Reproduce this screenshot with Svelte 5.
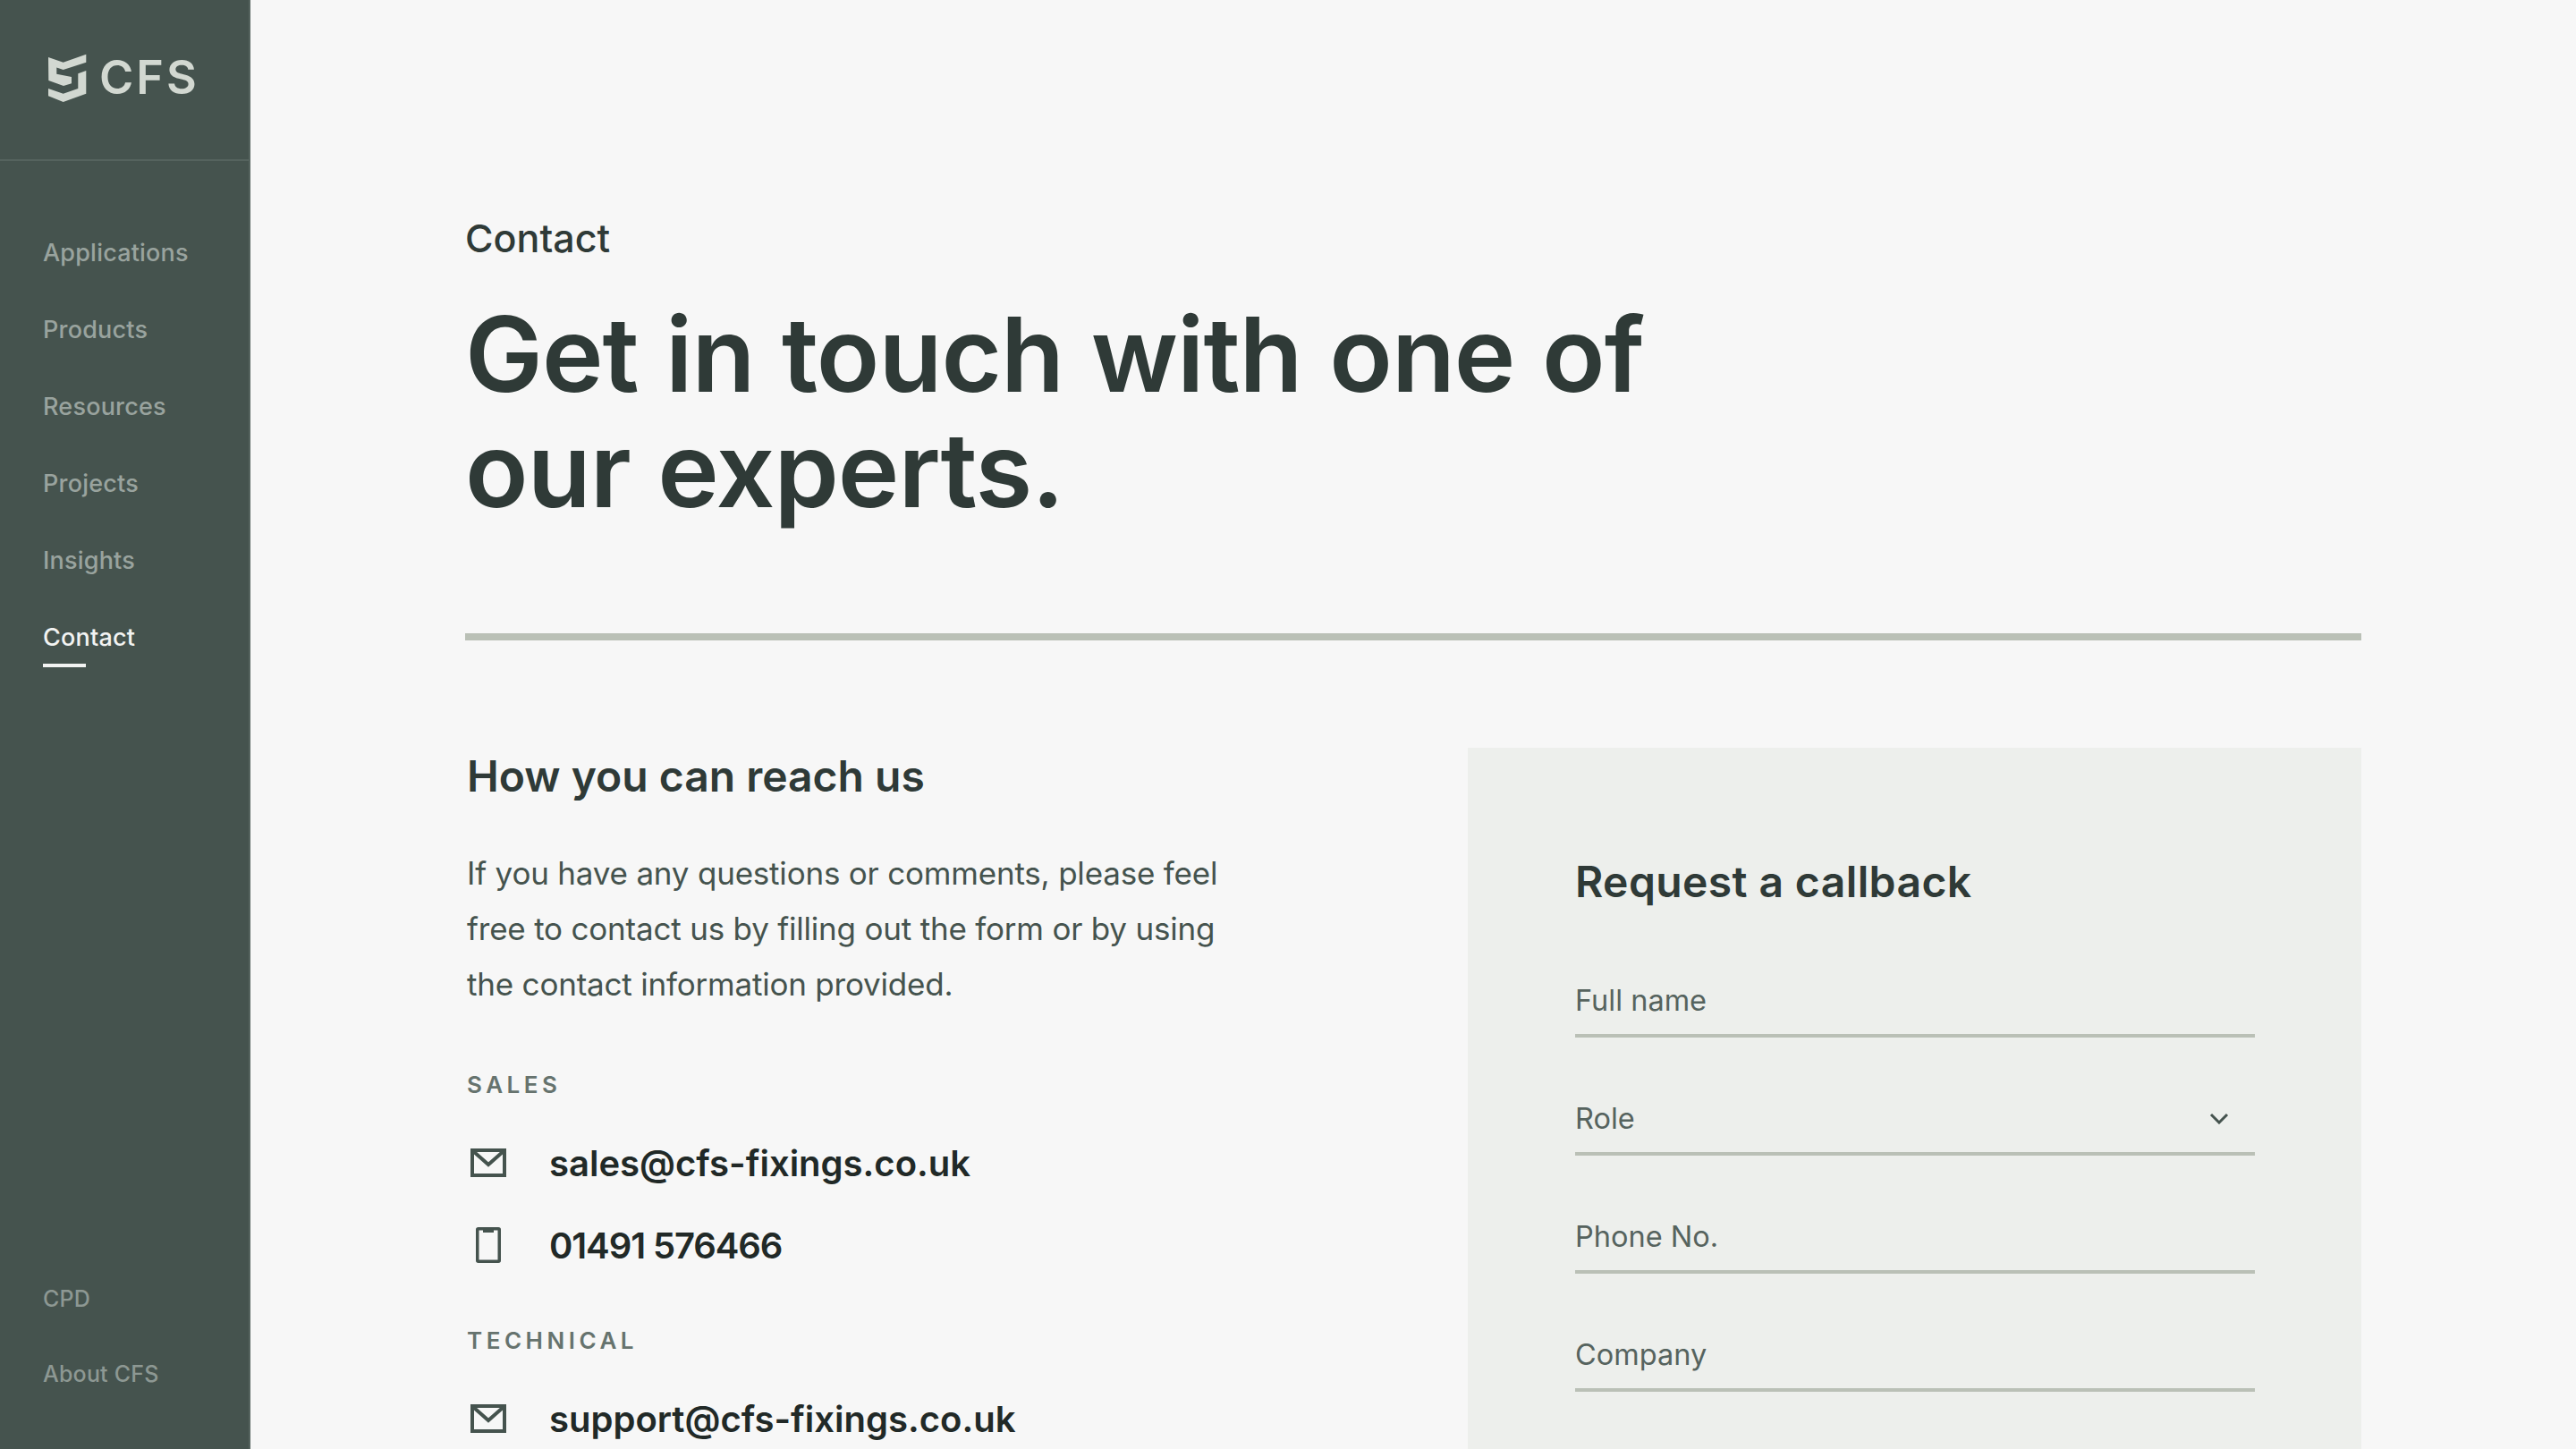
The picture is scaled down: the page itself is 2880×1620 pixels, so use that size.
<script>
  const nav = ['Applications', 'Products', 'Resources', 'Projects', 'Insights', 'Contact'];
  const fields = ['Full name', 'Role', 'Phone No.', 'Company'];
</script>

{#snippet mail()}
  <svg width="40" height="32" viewBox="0 0 40 32" fill="none" stroke="#45534e" stroke-width="4">
    <rect x="2" y="2" width="36" height="28" />
    <path d="M3 3l17 15L37 3" />
  </svg>
{/snippet}

<div class="page">
  <aside class="side">
    <div class="brand">
      <svg width="60" height="66" viewBox="0 0 60 66" fill="#d2d8d1">
        <path d="M6 10L22.7 15.7 48.3 6.7V15.7L22.7 24 15.3 21.5V28.7L32 32V39.3L23 42 6.3 36z" />
        <path d="M39.3 28.3L48.3 25V50.7L22.7 60 6 53.3V45L22.7 50.7 39.3 45z" />
      </svg>
      <span class="logo-text">CFS</span>
    </div>
    <nav class="nav">
      {#each nav as item}
        <a href="#/" class="nav-item" class:active={item === 'Contact'}>{item}</a>
      {/each}
    </nav>
    <div class="nav-bottom">
      <a href="#/" class="nav-item">CPD</a>
      <a href="#/" class="nav-item">About CFS</a>
    </div>
  </aside>

  <main class="main">
    <div class="kicker">Contact</div>
    <h1>Get in touch with one of<br />our experts.</h1>
    <hr class="rule" />
    <div class="cols">
      <section class="reach">
        <h2>How you can reach us</h2>
        <p>If you have any questions or comments, please feel free to contact us by filling out the form or by using the contact information provided.</p>
        <div class="label">SALES</div>
        <div class="row">
          <span class="ico-box">{@render mail()}</span>
          <span>sales@cfs-fixings.co.uk</span>
        </div>
        <div class="row">
          <span class="ico-box">
            <svg width="28" height="40" viewBox="0 0 28 40" fill="none" stroke="#45534e" stroke-width="3.5">
              <rect x="1.75" y="1.75" width="24.5" height="36.5" rx="1" />
              <rect x="8" y="2" width="12" height="4" fill="#45534e" stroke="none" />
            </svg>
          </span>
          <span class="tel">01491 576466</span>
        </div>
        <div class="label second">TECHNICAL</div>
        <div class="row">
          <span class="ico-box">{@render mail()}</span>
          <span>support@cfs-fixings.co.uk</span>
        </div>
      </section>
      <section class="card">
        <h2>Request a callback</h2>
        {#each fields as f}
          <div class="field">
            <span>{f}</span>
            {#if f === 'Role'}
              <svg class="chev" width="22" height="13" viewBox="0 0 22 13" fill="none" stroke="#45534e" stroke-width="3">
                <path d="M2 2l9 9 9-9" />
              </svg>
            {/if}
          </div>
        {/each}
      </section>
    </div>
  </main>
</div>

<style>
  :global(body) {
    margin: 0;
    background: #f7f7f7;
  }

  .page {
    display: flex;
    width: 2880px;
    height: 1620px;
    overflow: hidden;
    font-family: Inter, 'Noto Sans', sans-serif;
    color: #2f3a37;
  }

  .side {
    width: 280px;
    flex-shrink: 0;
    box-sizing: border-box;
    background: #45534e;
    border-right: 2px solid #55635e;
    display: flex;
    flex-direction: column;
    padding-bottom: 67px;
  }

  .brand {
    box-sizing: border-box;
    border-bottom: 2px solid #55635e;
    height: 180px;
    display: flex;
    align-items: center;
    gap: 3px;
    padding: 0 0 4px 48px;
  }

  .logo-text {
    font-size: 52px;
    letter-spacing: 3px;
    color: #d2d8d1;
    font-weight: 600;
    line-height: 1;
  }

  .nav {
    display: flex;
    flex-direction: column;
    gap: 52px;
    padding: 86px 48px 0;
  }

  .nav-bottom {
    margin-top: auto;
    display: flex;
    flex-direction: column;
    gap: 50px;
    padding: 0 48px;
  }

  .nav-item {
    font-size: 27px;
    line-height: 34px;
    font-weight: 500;
    letter-spacing: 0.2px;
    color: #99a39e;
    text-decoration: none;
    position: relative;
  }

  .nav-bottom .nav-item {
    font-size: 25px;
    color: #8d9893;
  }

  .nav-item.active {
    color: #f2f3f2;
  }

  .nav-item.active::after {
    content: '';
    position: absolute;
    left: 0;
    top: 46px;
    width: 48px;
    height: 4px;
    background: #f2f3f2;
  }

  .main {
    flex: 1;
    padding: 240px 240px 0;
    min-width: 0;
  }

  .kicker {
    font-size: 43px;
    line-height: 52px;
    font-weight: 500;
  }

  h1 {
    margin: 40px 0 0;
    font-size: 116px;
    line-height: 129px;
    font-weight: 600;
    letter-spacing: -1px;
    word-spacing: 2.4px;
  }

  .rule {
    margin: 118px 0 0;
    border: 0;
    height: 8px;
    background: #bac0b6;
  }

  .cols {
    display: flex;
    justify-content: space-between;
    margin-top: 120px;
  }

  .reach {
    width: 860px;
    padding: 2px 0 0 2px;
  }

  h2 {
    margin: 0;
    font-size: 48px;
    line-height: 60px;
    font-weight: 600;
  }

  p {
    margin: 47px 0 0;
    width: 850px;
    font-size: 35px;
    line-height: 62px;
    letter-spacing: -0.2px;
    color: #45534e;
  }

  .label {
    margin-top: 66px;
    font-size: 26px;
    line-height: 32px;
    letter-spacing: 4.5px;
    font-weight: 600;
    color: #66736e;
  }

  .label.second {
    margin-top: 59px;
  }

  .row {
    display: flex;
    align-items: center;
    margin-top: 28px;
    height: 64px;
    font-size: 40px;
    font-weight: 600;
    color: #212927;
  }

  .label + .row {
    margin-top: 39px;
  }

  .tel {
    letter-spacing: -1.1px;
  }

  .ico-box {
    width: 48px;
    margin-right: 44px;
    display: flex;
    justify-content: center;
    flex-shrink: 0;
  }

  .card {
    width: 999px;
    height: 900px;
    box-sizing: border-box;
    background: #edefec;
    padding: 120px 119px 0 120px;
  }

  .card h2 {
    letter-spacing: 0.4px;
  }

  .field {
    display: flex;
    align-items: center;
    justify-content: space-between;
    height: 56px;
    margin-top: 62px;
    padding-bottom: 10px;
    border-bottom: 4px solid #bac0b6;
    font-size: 32.5px;
    color: #56635e;
  }

  .card h2 + .field {
    margin-top: 74px;
  }

  .chev {
    margin-right: 29px;
  }
</style>
